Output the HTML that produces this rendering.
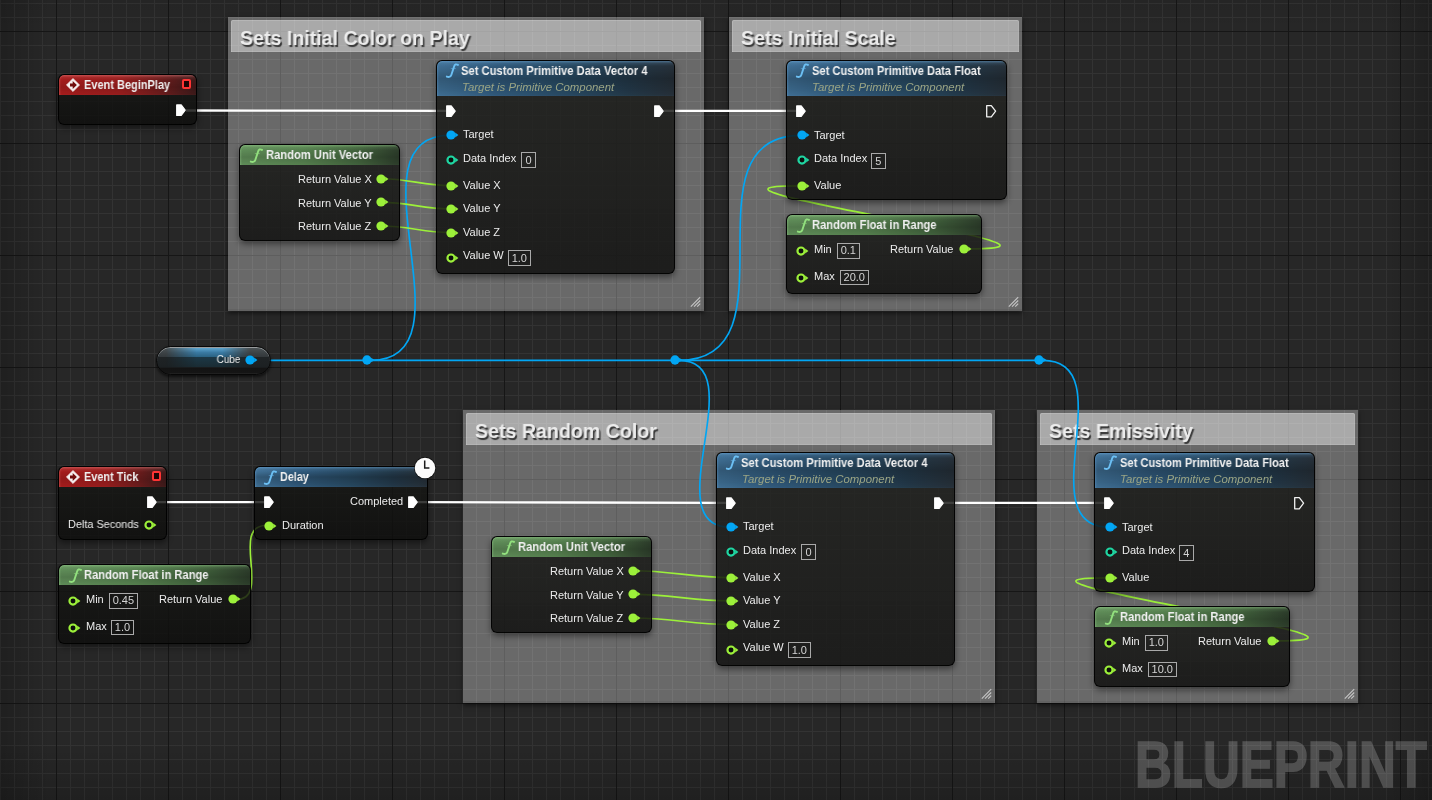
<!DOCTYPE html><html><head><meta charset="utf-8"><style>
*{margin:0;padding:0;box-sizing:border-box}
html,body{width:1432px;height:800px;overflow:hidden;background:#262626}
body{position:relative;font-family:"Liberation Sans",sans-serif}
.cm{position:absolute;background:rgba(255,255,255,0.31);box-shadow:0 2px 5px rgba(0,0,0,0.6),inset 0 -2px 0 rgba(0,0,0,0.06)}
.cmb{display:none}
.cmt{position:absolute;background:rgba(255,255,255,0.43);border-radius:2px 2px 0 0;box-shadow:inset 0 1px 0 rgba(255,255,255,0.16),inset -1px 0 0 rgba(255,255,255,0.1),inset 1px 0 0 rgba(255,255,255,0.14),inset 0 -1px 0 rgba(255,255,255,0.12)}
.nd{position:absolute;border-radius:6px;background:linear-gradient(180deg,rgba(24,25,22,0.82),rgba(14,14,13,0.84));border:1px solid rgba(0,0,0,0.9);box-shadow:0 3px 6px rgba(0,0,0,0.45);overflow:hidden}
.hd{position:absolute;left:0;top:0;right:0;border-radius:5px 5px 0 0}
.hd.red{background:linear-gradient(180deg,rgba(255,150,150,0.4) 0,rgba(255,150,150,0.1) 2.5px,rgba(0,0,0,0) 5px,rgba(0,0,0,0.1) 60%,rgba(0,0,0,0) 100%),linear-gradient(90deg,#a41c1c 0%,#961d1d 45%,#6a1c1c 75%,#3c1a1a 100%);box-shadow:inset 2px 0 2px -1px rgba(255,150,150,0.3)}
.hd.blue{background:linear-gradient(180deg,rgba(120,180,230,0.45) 0,rgba(120,180,230,0.12) 2.5px,rgba(0,0,0,0) 5px,rgba(0,0,0,0.2) 50%,rgba(0,0,0,0.08) 85%,rgba(0,0,0,0) 100%),linear-gradient(90deg,#3f6f94 0%,#30597b 25%,#284a63 55%,#23394a 80%,#263039 100%);box-shadow:inset 2px 0 2px -1px rgba(110,170,220,0.35)}
.hd.green{background:linear-gradient(180deg,rgba(170,230,160,0.4) 0,rgba(170,230,160,0.1) 2.5px,rgba(0,0,0,0) 5px,rgba(0,0,0,0.12) 60%,rgba(0,0,0,0) 100%),linear-gradient(90deg,#5f8c58 0%,#557f4e 40%,#40603b 75%,#2c3c2a 100%);box-shadow:inset 2px 0 2px -1px rgba(170,230,160,0.3)}
.t{position:absolute;white-space:nowrap;line-height:1;transform-origin:left top;will-change:transform}
.pin{position:absolute;overflow:visible}
.ib{position:absolute;border:1px solid #a9a9a9;color:#d4d4d4;font-size:11px;text-align:center;white-space:nowrap;will-change:transform}
.rsq{position:absolute;border:2px solid #ff3434;background:#1e0505;border-radius:2px}
.cube{position:absolute;border-radius:14.5px;border:1px solid #070707;overflow:hidden;background:linear-gradient(180deg,#5c6366 0,#4a5154 1.5px,#3c4245 6px,#32373a 10.5px,#1f2325 10.5px,#1c2022 20px,#131313 21.5px,#151515 26px,#2a2a2a 27px);box-shadow:0 2px 3px rgba(0,0,0,0.6),inset 0 1px 0 rgba(220,220,220,0.5)}
.cg1{position:absolute;left:0;right:0;top:1px;height:9.5px;background:linear-gradient(180deg,#5ea6d0,#3a7aa2 50%,#2a6282);-webkit-mask-image:linear-gradient(90deg,transparent 8%,#000 35%,#000 58%,transparent 82%)}
.cg2{position:absolute;left:0;right:0;top:10.5px;height:9.5px;background:linear-gradient(180deg,#1c3846,#1a2c34);-webkit-mask-image:linear-gradient(90deg,transparent 8%,#000 35%,#000 58%,transparent 82%)}
.bp{position:absolute;left:1134.8px;top:733px;font-size:64px;font-weight:bold;color:#fff;-webkit-text-stroke:1.7px #fff;opacity:0.2;line-height:1;transform:scaleX(0.797);transform-origin:left top;white-space:nowrap}
</style></head><body><svg width="1432" height="800" style="position:absolute;left:0;top:0" shape-rendering="crispEdges"><rect width="1432" height="800" fill="#272727"/><path d="M0.5 0V800M14.5 0V800M28.5 0V800M42.5 0V800M70.5 0V800M84.5 0V800M98.5 0V800M112.5 0V800M126.5 0V800M140.5 0V800M154.5 0V800M182.5 0V800M196.5 0V800M210.5 0V800M224.5 0V800M238.5 0V800M252.5 0V800M266.5 0V800M294.5 0V800M308.5 0V800M322.5 0V800M336.5 0V800M350.5 0V800M364.5 0V800M378.5 0V800M406.5 0V800M420.5 0V800M434.5 0V800M448.5 0V800M462.5 0V800M476.5 0V800M490.5 0V800M518.5 0V800M532.5 0V800M546.5 0V800M560.5 0V800M574.5 0V800M588.5 0V800M602.5 0V800M630.5 0V800M644.5 0V800M658.5 0V800M672.5 0V800M686.5 0V800M700.5 0V800M714.5 0V800M742.5 0V800M756.5 0V800M770.5 0V800M784.5 0V800M798.5 0V800M812.5 0V800M826.5 0V800M854.5 0V800M868.5 0V800M882.5 0V800M896.5 0V800M910.5 0V800M924.5 0V800M938.5 0V800M966.5 0V800M980.5 0V800M994.5 0V800M1008.5 0V800M1022.5 0V800M1036.5 0V800M1050.5 0V800M1078.5 0V800M1092.5 0V800M1106.5 0V800M1120.5 0V800M1134.5 0V800M1148.5 0V800M1162.5 0V800M1190.5 0V800M1204.5 0V800M1218.5 0V800M1232.5 0V800M1246.5 0V800M1260.5 0V800M1274.5 0V800M1302.5 0V800M1316.5 0V800M1330.5 0V800M1344.5 0V800M1358.5 0V800M1372.5 0V800M1386.5 0V800M1414.5 0V800M1428.5 0V800M0 3.5H1432M0 17.5H1432M0 45.5H1432M0 59.5H1432M0 73.5H1432M0 87.5H1432M0 101.5H1432M0 115.5H1432M0 129.5H1432M0 157.5H1432M0 171.5H1432M0 185.5H1432M0 199.5H1432M0 213.5H1432M0 227.5H1432M0 241.5H1432M0 269.5H1432M0 283.5H1432M0 297.5H1432M0 311.5H1432M0 325.5H1432M0 339.5H1432M0 353.5H1432M0 381.5H1432M0 395.5H1432M0 409.5H1432M0 423.5H1432M0 437.5H1432M0 451.5H1432M0 465.5H1432M0 493.5H1432M0 507.5H1432M0 521.5H1432M0 535.5H1432M0 549.5H1432M0 563.5H1432M0 577.5H1432M0 605.5H1432M0 619.5H1432M0 633.5H1432M0 647.5H1432M0 661.5H1432M0 675.5H1432M0 689.5H1432M0 717.5H1432M0 731.5H1432M0 745.5H1432M0 759.5H1432M0 773.5H1432M0 787.5H1432" stroke="#333333" stroke-width="1"/><path d="M56.5 0V800M168.5 0V800M280.5 0V800M392.5 0V800M504.5 0V800M616.5 0V800M728.5 0V800M840.5 0V800M952.5 0V800M1064.5 0V800M1176.5 0V800M1288.5 0V800M1400.5 0V800M0 31.5H1432M0 143.5H1432M0 255.5H1432M0 367.5H1432M0 479.5H1432M0 591.5H1432M0 703.5H1432" stroke="#161616" stroke-width="1"/></svg><div style="position:absolute;left:0;top:0;width:1432px;height:800px;background:linear-gradient(90deg,rgba(0,0,0,0.2) 0,rgba(0,0,0,0) 50px),linear-gradient(270deg,rgba(0,0,0,0.2) 0,rgba(0,0,0,0) 50px),linear-gradient(0deg,rgba(0,0,0,0.18) 0,rgba(0,0,0,0) 60px),linear-gradient(180deg,rgba(0,0,0,0.06) 0,rgba(0,0,0,0) 30px)"></div><div class="cm" style="left:228px;top:17px;width:476px;height:294px"><div class="cmb"></div></div><div class="cmt" style="left:230.5px;top:19.5px;width:470.5px;height:32.8px"></div><div class="t" style="left:239.80px;top:27.56px;font-size:20.6px;font-weight:bold;font-style:normal;color:#ececec;transform:scaleX(0.952);text-shadow:1.5px 1.5px 1px rgba(0,0,0,0.7)">Sets Initial Color on Play</div><svg class="pin" style="left:688px;top:295px" width="16" height="16"><path d="M12.2 2.2L2.8 11.6M12.2 5.5L6 11.6M12.2 8.6L9.2 11.6" stroke="#c4c4c4" stroke-width="1.2"/></svg><div class="cm" style="left:729px;top:17px;width:293px;height:294px"><div class="cmb"></div></div><div class="cmt" style="left:731.5px;top:19.5px;width:287.5px;height:32.8px"></div><div class="t" style="left:740.80px;top:27.56px;font-size:20.6px;font-weight:bold;font-style:normal;color:#ececec;transform:scaleX(0.952);text-shadow:1.5px 1.5px 1px rgba(0,0,0,0.7)">Sets Initial Scale</div><svg class="pin" style="left:1006px;top:295px" width="16" height="16"><path d="M12.2 2.2L2.8 11.6M12.2 5.5L6 11.6M12.2 8.6L9.2 11.6" stroke="#c4c4c4" stroke-width="1.2"/></svg><div class="cm" style="left:463px;top:410px;width:532px;height:293px"><div class="cmb"></div></div><div class="cmt" style="left:465.5px;top:412.5px;width:526.5px;height:32.8px"></div><div class="t" style="left:474.80px;top:420.56px;font-size:20.6px;font-weight:bold;font-style:normal;color:#ececec;transform:scaleX(0.952);text-shadow:1.5px 1.5px 1px rgba(0,0,0,0.7)">Sets Random Color</div><svg class="pin" style="left:979px;top:687px" width="16" height="16"><path d="M12.2 2.2L2.8 11.6M12.2 5.5L6 11.6M12.2 8.6L9.2 11.6" stroke="#c4c4c4" stroke-width="1.2"/></svg><div class="cm" style="left:1037px;top:410px;width:321px;height:293px"><div class="cmb"></div></div><div class="cmt" style="left:1039.5px;top:412.5px;width:315.5px;height:32.8px"></div><div class="t" style="left:1048.80px;top:420.56px;font-size:20.6px;font-weight:bold;font-style:normal;color:#ececec;transform:scaleX(0.952);text-shadow:1.5px 1.5px 1px rgba(0,0,0,0.7)">Sets Emissivity</div><svg class="pin" style="left:1342px;top:687px" width="16" height="16"><path d="M12.2 2.2L2.8 11.6M12.2 5.5L6 11.6M12.2 8.6L9.2 11.6" stroke="#c4c4c4" stroke-width="1.2"/></svg><svg width="1432" height="800" style="position:absolute;left:0;top:0"><path d="M186.00 110.50C277.11 110.50 354.89 110.80 446.00 110.80" stroke="#ffffff" stroke-width="2.3" fill="none"/><path d="M664.00 110.80C710.20 110.80 749.80 110.80 796.00 110.80" stroke="#ffffff" stroke-width="2.3" fill="none"/><path d="M157.00 502.20C194.45 502.20 226.55 502.20 264.00 502.20" stroke="#ffffff" stroke-width="2.3" fill="none"/><path d="M417.00 502.20C525.36 502.20 617.64 502.80 726.00 502.80" stroke="#ffffff" stroke-width="2.3" fill="none"/><path d="M944.00 502.80C1000.00 502.80 1048.00 502.80 1104.00 502.80" stroke="#ffffff" stroke-width="2.3" fill="none"/><path d="M257.00 360.30C294.10 360.30 325.90 360.30 363.00 360.30" stroke="#02a6f4" stroke-width="1.65" fill="none"/><path d="M371.00 360.30C476.00 360.30 566.00 360.30 671.00 360.30" stroke="#02a6f4" stroke-width="1.65" fill="none"/><path d="M679.00 360.30C803.60 360.30 910.40 360.30 1035.00 360.30" stroke="#02a6f4" stroke-width="1.65" fill="none"/><path d="M371.00 360.30C477.44 360.30 343.56 135.20 450.00 135.20" stroke="#02a6f4" stroke-width="1.65" fill="none"/><path d="M679.00 360.30C800.41 360.30 679.59 135.40 801.00 135.40" stroke="#02a6f4" stroke-width="1.65" fill="none"/><path d="M679.00 360.30C755.26 360.30 653.74 527.20 730.00 527.20" stroke="#02a6f4" stroke-width="1.65" fill="none"/><path d="M1043.00 360.30C1124.52 360.30 1027.48 527.20 1109.00 527.20" stroke="#02a6f4" stroke-width="1.65" fill="none"/><path d="M382.00 178.70C408.04 178.70 423.46 185.60 449.50 185.60" stroke="#9cf03a" stroke-width="1.65" fill="none"/><path d="M382.00 202.40C407.87 202.40 423.63 208.80 449.50 208.80" stroke="#9cf03a" stroke-width="1.65" fill="none"/><path d="M382.00 226.00C407.90 226.00 423.60 232.50 449.50 232.50" stroke="#9cf03a" stroke-width="1.65" fill="none"/><path d="M634.00 570.70C669.84 570.70 693.66 577.60 729.50 577.60" stroke="#9cf03a" stroke-width="1.65" fill="none"/><path d="M634.00 594.40C669.66 594.40 693.84 600.80 729.50 600.80" stroke="#9cf03a" stroke-width="1.65" fill="none"/><path d="M634.00 618.00C669.70 618.00 693.80 624.50 729.50 624.50" stroke="#9cf03a" stroke-width="1.65" fill="none"/><path d="M971.00 248.80C1118.50 248.80 649.50 185.80 797.00 185.80" stroke="#9cf03a" stroke-width="1.65" fill="none"/><path d="M1279.00 640.80C1426.50 640.80 957.50 577.80 1105.00 577.80" stroke="#9cf03a" stroke-width="1.65" fill="none"/><path d="M236.00 599.50C272.40 599.50 229.60 525.50 266.00 525.50" stroke="#9cf03a" stroke-width="1.65" fill="none"/></svg><div class="nd" style="left:57.5px;top:74px;width:139.5px;height:51.0px"><div class="hd red" style="height:20px"></div></div><svg class="pin" style="left:64px;top:76px" width="18" height="18"><path d="M9 2.4L15.6 9L9 15.6L2.4 9Z" fill="#f6f0f0" stroke="#f6f0f0" stroke-width="0.6" stroke-linejoin="round"/><path d="M6 7.6H8.7V4.9L12.9 9L8.7 13.1V10.4H6Z" fill="#700d0d"/></svg><div class="t" style="left:83.70px;top:79.14px;font-size:12px;font-weight:bold;font-style:normal;color:#efefef;transform:scaleX(0.916);">Event BeginPlay</div><div class="rsq" style="left:182px;top:79px;width:9px;height:10.200000000000003px"></div><svg class="pin" style="left:175px;top:103.3px" width="12" height="15"><path d="M1.7 1.9H6.2L10.2 7.2L6.2 12.5H1.7Z" fill="#fff" stroke="#fff" stroke-width="1.2" stroke-linejoin="round"/></svg><div class="nd" style="left:238.5px;top:144px;width:161.5px;height:96.5px"><div class="hd green" style="height:20px"></div></div><svg class="pin" style="left:248px;top:146.5px" width="15" height="17"><path d="M14 2.9Q12.6 2.1 11.4 2.5Q10.6 2.9 10.2 4.2L7.3 13Q6.8 14.6 5.2 14.9Q4 15.1 2.8 14.6" fill="none" stroke="#92e07e" stroke-width="1.9" stroke-linecap="round" stroke-linejoin="round"/><path d="M6.8 6.6H11.8" stroke="#92e07e" stroke-width="0.9" opacity="0.55"/></svg><div class="t" style="left:265.50px;top:148.84px;font-size:12px;font-weight:bold;font-style:normal;color:#f0f0f0;transform:scaleX(0.933);">Random Unit Vector</div><svg class="pin" style="left:373.70px;top:171.70px" width="16" height="14"><circle cx="7" cy="7" r="4.6" fill="#9cf03a"/><path d="M11.2 4.6L14.4 7L11.2 9.4Z" fill="#9cf03a"/></svg><div class="t" style="right:1060.60px;top:173.99px;font-size:11px;font-weight:normal;font-style:normal;color:#ebebeb;transform:scaleX(1.0);transform-origin:right top;">Return Value X</div><svg class="pin" style="left:373.70px;top:195.40px" width="16" height="14"><circle cx="7" cy="7" r="4.6" fill="#9cf03a"/><path d="M11.2 4.6L14.4 7L11.2 9.4Z" fill="#9cf03a"/></svg><div class="t" style="right:1060.60px;top:197.69px;font-size:11px;font-weight:normal;font-style:normal;color:#ebebeb;transform:scaleX(1.0);transform-origin:right top;">Return Value Y</div><svg class="pin" style="left:373.70px;top:219.00px" width="16" height="14"><circle cx="7" cy="7" r="4.6" fill="#9cf03a"/><path d="M11.2 4.6L14.4 7L11.2 9.4Z" fill="#9cf03a"/></svg><div class="t" style="right:1060.60px;top:221.29px;font-size:11px;font-weight:normal;font-style:normal;color:#ebebeb;transform:scaleX(1.0);transform-origin:right top;">Return Value Z</div><div class="nd" style="left:435.5px;top:60px;width:239.5px;height:213.5px"><div class="hd blue" style="height:35px"></div></div><svg class="pin" style="left:444px;top:62px" width="15" height="17"><path d="M14 2.9Q12.6 2.1 11.4 2.5Q10.6 2.9 10.2 4.2L7.3 13Q6.8 14.6 5.2 14.9Q4 15.1 2.8 14.6" fill="none" stroke="#6cc0f4" stroke-width="1.9" stroke-linecap="round" stroke-linejoin="round"/><path d="M6.8 6.6H11.8" stroke="#6cc0f4" stroke-width="0.9" opacity="0.55"/></svg><div class="t" style="left:461.40px;top:64.64px;font-size:12px;font-weight:bold;font-style:normal;color:#f0f0f0;transform:scaleX(0.932);">Set Custom Primitive Data Vector 4</div><div class="t" style="left:462.00px;top:81.56px;font-size:10.8px;font-weight:normal;font-style:italic;color:#9ba585;transform:scaleX(1.055);">Target is Primitive Component</div><svg class="pin" style="left:445px;top:103.8px" width="12" height="15"><path d="M1.7 1.9H6.2L10.2 7.2L6.2 12.5H1.7Z" fill="#fff" stroke="#fff" stroke-width="1.2" stroke-linejoin="round"/></svg><svg class="pin" style="left:653px;top:103.8px" width="12" height="15"><path d="M1.7 1.9H6.2L10.2 7.2L6.2 12.5H1.7Z" fill="#fff" stroke="#fff" stroke-width="1.2" stroke-linejoin="round"/></svg><svg class="pin" style="left:443.50px;top:128.00px" width="16" height="14"><circle cx="7" cy="7" r="4.6" fill="#02a6f4"/><path d="M11.2 4.6L14.4 7L11.2 9.4Z" fill="#02a6f4"/></svg><div class="t" style="left:463.00px;top:129.39px;font-size:11px;font-weight:normal;font-style:normal;color:#ebebeb;transform:scaleX(1.0);">Target</div><svg class="pin" style="left:443.50px;top:153.30px" width="16" height="14"><circle cx="7" cy="7" r="3.55" fill="#0e0e0e" stroke="#1fd6a2" stroke-width="2.15"/><path d="M11.2 4.6L14.4 7L11.2 9.4Z" fill="#1fd6a2"/></svg><div class="t" style="left:463.00px;top:153.19px;font-size:11px;font-weight:normal;font-style:normal;color:#ebebeb;transform:scaleX(1.0);">Data Index</div><div class="ib" style="left:521.0px;top:152.2px;width:15.0px;height:16.4px;line-height:14.4px">0</div><svg class="pin" style="left:443.50px;top:178.60px" width="16" height="14"><circle cx="7" cy="7" r="4.6" fill="#9cf03a"/><path d="M11.2 4.6L14.4 7L11.2 9.4Z" fill="#9cf03a"/></svg><div class="t" style="left:463.00px;top:179.99px;font-size:11px;font-weight:normal;font-style:normal;color:#ebebeb;transform:scaleX(1.0);">Value X</div><svg class="pin" style="left:443.50px;top:201.80px" width="16" height="14"><circle cx="7" cy="7" r="4.6" fill="#9cf03a"/><path d="M11.2 4.6L14.4 7L11.2 9.4Z" fill="#9cf03a"/></svg><div class="t" style="left:463.00px;top:203.19px;font-size:11px;font-weight:normal;font-style:normal;color:#ebebeb;transform:scaleX(1.0);">Value Y</div><svg class="pin" style="left:443.50px;top:225.50px" width="16" height="14"><circle cx="7" cy="7" r="4.6" fill="#9cf03a"/><path d="M11.2 4.6L14.4 7L11.2 9.4Z" fill="#9cf03a"/></svg><div class="t" style="left:463.00px;top:226.89px;font-size:11px;font-weight:normal;font-style:normal;color:#ebebeb;transform:scaleX(1.0);">Value Z</div><svg class="pin" style="left:443.50px;top:250.50px" width="16" height="14"><circle cx="7" cy="7" r="3.55" fill="#0e0e0e" stroke="#9cf03a" stroke-width="2.15"/><path d="M11.2 4.6L14.4 7L11.2 9.4Z" fill="#9cf03a"/></svg><div class="t" style="left:463.00px;top:250.39px;font-size:11px;font-weight:normal;font-style:normal;color:#ebebeb;transform:scaleX(1.0);">Value W</div><div class="ib" style="left:508.0px;top:250.0px;width:22.6px;height:16.0px;line-height:14.0px">1.0</div><div class="nd" style="left:785.5px;top:60px;width:221.5px;height:139.5px"><div class="hd blue" style="height:35px"></div></div><svg class="pin" style="left:794px;top:62px" width="15" height="17"><path d="M14 2.9Q12.6 2.1 11.4 2.5Q10.6 2.9 10.2 4.2L7.3 13Q6.8 14.6 5.2 14.9Q4 15.1 2.8 14.6" fill="none" stroke="#6cc0f4" stroke-width="1.9" stroke-linecap="round" stroke-linejoin="round"/><path d="M6.8 6.6H11.8" stroke="#6cc0f4" stroke-width="0.9" opacity="0.55"/></svg><div class="t" style="left:811.50px;top:64.64px;font-size:12px;font-weight:bold;font-style:normal;color:#f0f0f0;transform:scaleX(0.927);">Set Custom Primitive Data Float</div><div class="t" style="left:812.00px;top:81.56px;font-size:10.8px;font-weight:normal;font-style:italic;color:#9ba585;transform:scaleX(1.055);">Target is Primitive Component</div><svg class="pin" style="left:795px;top:103.8px" width="12" height="15"><path d="M1.7 1.9H6.2L10.2 7.2L6.2 12.5H1.7Z" fill="#fff" stroke="#fff" stroke-width="1.2" stroke-linejoin="round"/></svg><svg class="pin" style="left:985px;top:103.8px" width="13" height="15"><path d="M1.7 1.6H6.3L10.6 7.2L6.3 12.8H1.7Z" fill="none" stroke="#f2f2f2" stroke-width="1.3" stroke-linejoin="round"/></svg><svg class="pin" style="left:794.60px;top:128.20px" width="16" height="14"><circle cx="7" cy="7" r="4.6" fill="#02a6f4"/><path d="M11.2 4.6L14.4 7L11.2 9.4Z" fill="#02a6f4"/></svg><div class="t" style="left:813.70px;top:129.59px;font-size:11px;font-weight:normal;font-style:normal;color:#ebebeb;transform:scaleX(1.0);">Target</div><svg class="pin" style="left:794.60px;top:153.30px" width="16" height="14"><circle cx="7" cy="7" r="3.55" fill="#0e0e0e" stroke="#1fd6a2" stroke-width="2.15"/><path d="M11.2 4.6L14.4 7L11.2 9.4Z" fill="#1fd6a2"/></svg><div class="t" style="left:813.70px;top:152.99px;font-size:11px;font-weight:normal;font-style:normal;color:#ebebeb;transform:scaleX(1.0);">Data Index</div><div class="ib" style="left:871.3px;top:152.5px;width:14.7px;height:16.3px;line-height:14.3px">5</div><svg class="pin" style="left:794.60px;top:178.80px" width="16" height="14"><circle cx="7" cy="7" r="4.6" fill="#9cf03a"/><path d="M11.2 4.6L14.4 7L11.2 9.4Z" fill="#9cf03a"/></svg><div class="t" style="left:813.70px;top:180.19px;font-size:11px;font-weight:normal;font-style:normal;color:#ebebeb;transform:scaleX(1.0);">Value</div><div class="nd" style="left:785.5px;top:214px;width:196.5px;height:79.5px"><div class="hd green" style="height:20px"></div></div><svg class="pin" style="left:795px;top:216.5px" width="15" height="17"><path d="M14 2.9Q12.6 2.1 11.4 2.5Q10.6 2.9 10.2 4.2L7.3 13Q6.8 14.6 5.2 14.9Q4 15.1 2.8 14.6" fill="none" stroke="#92e07e" stroke-width="1.9" stroke-linecap="round" stroke-linejoin="round"/><path d="M6.8 6.6H11.8" stroke="#92e07e" stroke-width="0.9" opacity="0.55"/></svg><div class="t" style="left:811.50px;top:219.04px;font-size:12px;font-weight:bold;font-style:normal;color:#f0f0f0;transform:scaleX(0.929);">Random Float in Range</div><svg class="pin" style="left:794.30px;top:243.80px" width="16" height="14"><circle cx="7" cy="7" r="3.55" fill="#0e0e0e" stroke="#9cf03a" stroke-width="2.15"/><path d="M11.2 4.6L14.4 7L11.2 9.4Z" fill="#9cf03a"/></svg><div class="t" style="left:814.00px;top:244.09px;font-size:11px;font-weight:normal;font-style:normal;color:#ebebeb;transform:scaleX(1.0);">Min</div><div class="ib" style="left:837.3px;top:243.3px;width:22.7px;height:15.7px;line-height:13.7px">0.1</div><svg class="pin" style="left:794.30px;top:270.70px" width="16" height="14"><circle cx="7" cy="7" r="3.55" fill="#0e0e0e" stroke="#9cf03a" stroke-width="2.15"/><path d="M11.2 4.6L14.4 7L11.2 9.4Z" fill="#9cf03a"/></svg><div class="t" style="left:814.00px;top:270.89px;font-size:11px;font-weight:normal;font-style:normal;color:#ebebeb;transform:scaleX(1.0);">Max</div><div class="ib" style="left:839.7px;top:269.8px;width:28.5px;height:15.4px;line-height:13.4px">20.0</div><svg class="pin" style="left:956.80px;top:241.90px" width="16" height="14"><circle cx="7" cy="7" r="4.6" fill="#9cf03a"/><path d="M11.2 4.6L14.4 7L11.2 9.4Z" fill="#9cf03a"/></svg><div class="t" style="right:478.20px;top:244.09px;font-size:11px;font-weight:normal;font-style:normal;color:#ebebeb;transform:scaleX(1.0);transform-origin:right top;">Return Value</div><div class="cube" style="left:156px;top:345.5px;width:115px;height:29.5px"><div class="cg1"></div><div class="cg2"></div></div><div class="t" style="right:1191.70px;top:354.49px;font-size:11px;font-weight:normal;font-style:normal;color:#f0f0f0;transform:scaleX(0.9);transform-origin:right top;">Cube</div><svg class="pin" style="left:242.70px;top:353.00px" width="16" height="14"><circle cx="7" cy="7" r="4.6" fill="#02a6f4"/><path d="M11.2 4.6L14.4 7L11.2 9.4Z" fill="#02a6f4"/></svg><svg class="pin" style="left:359.4px;top:352.25px" width="16" height="16"><circle cx="8" cy="8" r="4.65" fill="#02a6f4"/><path d="M12.2 5.7L15.4 8L12.2 10.3Z" fill="#02a6f4"/></svg><svg class="pin" style="left:667.4px;top:352.25px" width="16" height="16"><circle cx="8" cy="8" r="4.65" fill="#02a6f4"/><path d="M12.2 5.7L15.4 8L12.2 10.3Z" fill="#02a6f4"/></svg><svg class="pin" style="left:1031.4px;top:352.25px" width="16" height="16"><circle cx="8" cy="8" r="4.65" fill="#02a6f4"/><path d="M12.2 5.7L15.4 8L12.2 10.3Z" fill="#02a6f4"/></svg><div class="nd" style="left:57.5px;top:466px;width:109.5px;height:73.5px"><div class="hd red" style="height:20px"></div></div><svg class="pin" style="left:64px;top:468px" width="18" height="18"><path d="M9 2.4L15.6 9L9 15.6L2.4 9Z" fill="#f6f0f0" stroke="#f6f0f0" stroke-width="0.6" stroke-linejoin="round"/><path d="M6 7.6H8.7V4.9L12.9 9L8.7 13.1V10.4H6Z" fill="#700d0d"/></svg><div class="t" style="left:83.70px;top:471.14px;font-size:12px;font-weight:bold;font-style:normal;color:#efefef;transform:scaleX(0.908);">Event Tick</div><div class="rsq" style="left:152px;top:471px;width:9px;height:10.199999999999989px"></div><svg class="pin" style="left:146px;top:494.8px" width="12" height="15"><path d="M1.7 1.9H6.2L10.2 7.2L6.2 12.5H1.7Z" fill="#fff" stroke="#fff" stroke-width="1.2" stroke-linejoin="round"/></svg><div class="t" style="left:68.20px;top:519.29px;font-size:11px;font-weight:normal;font-style:normal;color:#ebebeb;transform:scaleX(0.99);">Delta Seconds</div><svg class="pin" style="left:142.20px;top:518.30px" width="16" height="14"><circle cx="7" cy="7" r="3.55" fill="#0e0e0e" stroke="#9cf03a" stroke-width="2.15"/><path d="M11.2 4.6L14.4 7L11.2 9.4Z" fill="#9cf03a"/></svg><div class="nd" style="left:253.5px;top:466px;width:174.5px;height:73.5px"><div class="hd blue" style="height:20px"></div></div><svg class="pin" style="left:262px;top:468.5px" width="15" height="17"><path d="M14 2.9Q12.6 2.1 11.4 2.5Q10.6 2.9 10.2 4.2L7.3 13Q6.8 14.6 5.2 14.9Q4 15.1 2.8 14.6" fill="none" stroke="#6cc0f4" stroke-width="1.9" stroke-linecap="round" stroke-linejoin="round"/><path d="M6.8 6.6H11.8" stroke="#6cc0f4" stroke-width="0.9" opacity="0.55"/></svg><div class="t" style="left:279.50px;top:470.64px;font-size:12px;font-weight:bold;font-style:normal;color:#f0f0f0;transform:scaleX(0.9);">Delay</div><svg class="pin" style="left:263px;top:494.8px" width="12" height="15"><path d="M1.7 1.9H6.2L10.2 7.2L6.2 12.5H1.7Z" fill="#fff" stroke="#fff" stroke-width="1.2" stroke-linejoin="round"/></svg><svg class="pin" style="left:406.5px;top:494.8px" width="12" height="15"><path d="M1.7 1.9H6.2L10.2 7.2L6.2 12.5H1.7Z" fill="#fff" stroke="#fff" stroke-width="1.2" stroke-linejoin="round"/></svg><div class="t" style="right:1029.00px;top:495.89px;font-size:11px;font-weight:normal;font-style:normal;color:#ebebeb;transform:scaleX(1.0);transform-origin:right top;">Completed</div><svg class="pin" style="left:261.80px;top:518.50px" width="16" height="14"><circle cx="7" cy="7" r="4.6" fill="#9cf03a"/><path d="M11.2 4.6L14.4 7L11.2 9.4Z" fill="#9cf03a"/></svg><div class="t" style="left:281.50px;top:519.89px;font-size:11px;font-weight:normal;font-style:normal;color:#ebebeb;transform:scaleX(1.0);">Duration</div><svg class="pin" style="left:412.70px;top:455.60px" width="24" height="24"><circle cx="12" cy="12" r="10.9" fill="#0c0c0c" opacity="0.85"/><circle cx="12" cy="12" r="10.3" fill="#fbfbfb"/><path d="M11.7 4.6V11.9H16.4" fill="none" stroke="#1a1a1a" stroke-width="1.5"/></svg><div class="nd" style="left:57.5px;top:564px;width:193.5px;height:79.5px"><div class="hd green" style="height:20px"></div></div><svg class="pin" style="left:67px;top:566.5px" width="15" height="17"><path d="M14 2.9Q12.6 2.1 11.4 2.5Q10.6 2.9 10.2 4.2L7.3 13Q6.8 14.6 5.2 14.9Q4 15.1 2.8 14.6" fill="none" stroke="#92e07e" stroke-width="1.9" stroke-linecap="round" stroke-linejoin="round"/><path d="M6.8 6.6H11.8" stroke="#92e07e" stroke-width="0.9" opacity="0.55"/></svg><div class="t" style="left:83.50px;top:569.04px;font-size:12px;font-weight:bold;font-style:normal;color:#f0f0f0;transform:scaleX(0.929);">Random Float in Range</div><svg class="pin" style="left:66.30px;top:593.80px" width="16" height="14"><circle cx="7" cy="7" r="3.55" fill="#0e0e0e" stroke="#9cf03a" stroke-width="2.15"/><path d="M11.2 4.6L14.4 7L11.2 9.4Z" fill="#9cf03a"/></svg><div class="t" style="left:86.00px;top:594.09px;font-size:11px;font-weight:normal;font-style:normal;color:#ebebeb;transform:scaleX(1.0);">Min</div><div class="ib" style="left:109.2px;top:593.3px;width:28.8px;height:15.7px;line-height:13.7px">0.45</div><svg class="pin" style="left:66.30px;top:620.70px" width="16" height="14"><circle cx="7" cy="7" r="3.55" fill="#0e0e0e" stroke="#9cf03a" stroke-width="2.15"/><path d="M11.2 4.6L14.4 7L11.2 9.4Z" fill="#9cf03a"/></svg><div class="t" style="left:86.00px;top:620.89px;font-size:11px;font-weight:normal;font-style:normal;color:#ebebeb;transform:scaleX(1.0);">Max</div><div class="ib" style="left:111.3px;top:619.8px;width:22.9px;height:15.4px;line-height:13.4px">1.0</div><svg class="pin" style="left:225.80px;top:591.90px" width="16" height="14"><circle cx="7" cy="7" r="4.6" fill="#9cf03a"/><path d="M11.2 4.6L14.4 7L11.2 9.4Z" fill="#9cf03a"/></svg><div class="t" style="right:1209.20px;top:594.09px;font-size:11px;font-weight:normal;font-style:normal;color:#ebebeb;transform:scaleX(1.0);transform-origin:right top;">Return Value</div><div class="nd" style="left:490.5px;top:536px;width:161.5px;height:96.5px"><div class="hd green" style="height:20px"></div></div><svg class="pin" style="left:500px;top:538.5px" width="15" height="17"><path d="M14 2.9Q12.6 2.1 11.4 2.5Q10.6 2.9 10.2 4.2L7.3 13Q6.8 14.6 5.2 14.9Q4 15.1 2.8 14.6" fill="none" stroke="#92e07e" stroke-width="1.9" stroke-linecap="round" stroke-linejoin="round"/><path d="M6.8 6.6H11.8" stroke="#92e07e" stroke-width="0.9" opacity="0.55"/></svg><div class="t" style="left:517.50px;top:540.84px;font-size:12px;font-weight:bold;font-style:normal;color:#f0f0f0;transform:scaleX(0.933);">Random Unit Vector</div><svg class="pin" style="left:625.70px;top:563.70px" width="16" height="14"><circle cx="7" cy="7" r="4.6" fill="#9cf03a"/><path d="M11.2 4.6L14.4 7L11.2 9.4Z" fill="#9cf03a"/></svg><div class="t" style="right:808.60px;top:565.99px;font-size:11px;font-weight:normal;font-style:normal;color:#ebebeb;transform:scaleX(1.0);transform-origin:right top;">Return Value X</div><svg class="pin" style="left:625.70px;top:587.40px" width="16" height="14"><circle cx="7" cy="7" r="4.6" fill="#9cf03a"/><path d="M11.2 4.6L14.4 7L11.2 9.4Z" fill="#9cf03a"/></svg><div class="t" style="right:808.60px;top:589.69px;font-size:11px;font-weight:normal;font-style:normal;color:#ebebeb;transform:scaleX(1.0);transform-origin:right top;">Return Value Y</div><svg class="pin" style="left:625.70px;top:611.00px" width="16" height="14"><circle cx="7" cy="7" r="4.6" fill="#9cf03a"/><path d="M11.2 4.6L14.4 7L11.2 9.4Z" fill="#9cf03a"/></svg><div class="t" style="right:808.60px;top:613.29px;font-size:11px;font-weight:normal;font-style:normal;color:#ebebeb;transform:scaleX(1.0);transform-origin:right top;">Return Value Z</div><div class="nd" style="left:715.5px;top:452px;width:239.5px;height:213.5px"><div class="hd blue" style="height:35px"></div></div><svg class="pin" style="left:724px;top:454px" width="15" height="17"><path d="M14 2.9Q12.6 2.1 11.4 2.5Q10.6 2.9 10.2 4.2L7.3 13Q6.8 14.6 5.2 14.9Q4 15.1 2.8 14.6" fill="none" stroke="#6cc0f4" stroke-width="1.9" stroke-linecap="round" stroke-linejoin="round"/><path d="M6.8 6.6H11.8" stroke="#6cc0f4" stroke-width="0.9" opacity="0.55"/></svg><div class="t" style="left:741.40px;top:456.64px;font-size:12px;font-weight:bold;font-style:normal;color:#f0f0f0;transform:scaleX(0.932);">Set Custom Primitive Data Vector 4</div><div class="t" style="left:742.00px;top:473.56px;font-size:10.8px;font-weight:normal;font-style:italic;color:#9ba585;transform:scaleX(1.055);">Target is Primitive Component</div><svg class="pin" style="left:725px;top:495.8px" width="12" height="15"><path d="M1.7 1.9H6.2L10.2 7.2L6.2 12.5H1.7Z" fill="#fff" stroke="#fff" stroke-width="1.2" stroke-linejoin="round"/></svg><svg class="pin" style="left:933px;top:495.8px" width="12" height="15"><path d="M1.7 1.9H6.2L10.2 7.2L6.2 12.5H1.7Z" fill="#fff" stroke="#fff" stroke-width="1.2" stroke-linejoin="round"/></svg><svg class="pin" style="left:723.50px;top:520.00px" width="16" height="14"><circle cx="7" cy="7" r="4.6" fill="#02a6f4"/><path d="M11.2 4.6L14.4 7L11.2 9.4Z" fill="#02a6f4"/></svg><div class="t" style="left:743.00px;top:521.39px;font-size:11px;font-weight:normal;font-style:normal;color:#ebebeb;transform:scaleX(1.0);">Target</div><svg class="pin" style="left:723.50px;top:545.30px" width="16" height="14"><circle cx="7" cy="7" r="3.55" fill="#0e0e0e" stroke="#1fd6a2" stroke-width="2.15"/><path d="M11.2 4.6L14.4 7L11.2 9.4Z" fill="#1fd6a2"/></svg><div class="t" style="left:743.00px;top:545.19px;font-size:11px;font-weight:normal;font-style:normal;color:#ebebeb;transform:scaleX(1.0);">Data Index</div><div class="ib" style="left:801.0px;top:544.2px;width:15.0px;height:16.4px;line-height:14.4px">0</div><svg class="pin" style="left:723.50px;top:570.60px" width="16" height="14"><circle cx="7" cy="7" r="4.6" fill="#9cf03a"/><path d="M11.2 4.6L14.4 7L11.2 9.4Z" fill="#9cf03a"/></svg><div class="t" style="left:743.00px;top:571.99px;font-size:11px;font-weight:normal;font-style:normal;color:#ebebeb;transform:scaleX(1.0);">Value X</div><svg class="pin" style="left:723.50px;top:593.80px" width="16" height="14"><circle cx="7" cy="7" r="4.6" fill="#9cf03a"/><path d="M11.2 4.6L14.4 7L11.2 9.4Z" fill="#9cf03a"/></svg><div class="t" style="left:743.00px;top:595.19px;font-size:11px;font-weight:normal;font-style:normal;color:#ebebeb;transform:scaleX(1.0);">Value Y</div><svg class="pin" style="left:723.50px;top:617.50px" width="16" height="14"><circle cx="7" cy="7" r="4.6" fill="#9cf03a"/><path d="M11.2 4.6L14.4 7L11.2 9.4Z" fill="#9cf03a"/></svg><div class="t" style="left:743.00px;top:618.89px;font-size:11px;font-weight:normal;font-style:normal;color:#ebebeb;transform:scaleX(1.0);">Value Z</div><svg class="pin" style="left:723.50px;top:642.50px" width="16" height="14"><circle cx="7" cy="7" r="3.55" fill="#0e0e0e" stroke="#9cf03a" stroke-width="2.15"/><path d="M11.2 4.6L14.4 7L11.2 9.4Z" fill="#9cf03a"/></svg><div class="t" style="left:743.00px;top:642.39px;font-size:11px;font-weight:normal;font-style:normal;color:#ebebeb;transform:scaleX(1.0);">Value W</div><div class="ib" style="left:788.0px;top:642.0px;width:22.6px;height:16.0px;line-height:14.0px">1.0</div><div class="nd" style="left:1093.5px;top:452px;width:221.5px;height:139.5px"><div class="hd blue" style="height:35px"></div></div><svg class="pin" style="left:1102px;top:454px" width="15" height="17"><path d="M14 2.9Q12.6 2.1 11.4 2.5Q10.6 2.9 10.2 4.2L7.3 13Q6.8 14.6 5.2 14.9Q4 15.1 2.8 14.6" fill="none" stroke="#6cc0f4" stroke-width="1.9" stroke-linecap="round" stroke-linejoin="round"/><path d="M6.8 6.6H11.8" stroke="#6cc0f4" stroke-width="0.9" opacity="0.55"/></svg><div class="t" style="left:1119.50px;top:456.64px;font-size:12px;font-weight:bold;font-style:normal;color:#f0f0f0;transform:scaleX(0.927);">Set Custom Primitive Data Float</div><div class="t" style="left:1120.00px;top:473.56px;font-size:10.8px;font-weight:normal;font-style:italic;color:#9ba585;transform:scaleX(1.055);">Target is Primitive Component</div><svg class="pin" style="left:1103px;top:495.8px" width="12" height="15"><path d="M1.7 1.9H6.2L10.2 7.2L6.2 12.5H1.7Z" fill="#fff" stroke="#fff" stroke-width="1.2" stroke-linejoin="round"/></svg><svg class="pin" style="left:1293px;top:495.8px" width="13" height="15"><path d="M1.7 1.6H6.3L10.6 7.2L6.3 12.8H1.7Z" fill="none" stroke="#f2f2f2" stroke-width="1.3" stroke-linejoin="round"/></svg><svg class="pin" style="left:1102.60px;top:520.20px" width="16" height="14"><circle cx="7" cy="7" r="4.6" fill="#02a6f4"/><path d="M11.2 4.6L14.4 7L11.2 9.4Z" fill="#02a6f4"/></svg><div class="t" style="left:1121.70px;top:521.59px;font-size:11px;font-weight:normal;font-style:normal;color:#ebebeb;transform:scaleX(1.0);">Target</div><svg class="pin" style="left:1102.60px;top:545.30px" width="16" height="14"><circle cx="7" cy="7" r="3.55" fill="#0e0e0e" stroke="#1fd6a2" stroke-width="2.15"/><path d="M11.2 4.6L14.4 7L11.2 9.4Z" fill="#1fd6a2"/></svg><div class="t" style="left:1121.70px;top:544.99px;font-size:11px;font-weight:normal;font-style:normal;color:#ebebeb;transform:scaleX(1.0);">Data Index</div><div class="ib" style="left:1179.3px;top:544.5px;width:14.7px;height:16.3px;line-height:14.3px">4</div><svg class="pin" style="left:1102.60px;top:570.80px" width="16" height="14"><circle cx="7" cy="7" r="4.6" fill="#9cf03a"/><path d="M11.2 4.6L14.4 7L11.2 9.4Z" fill="#9cf03a"/></svg><div class="t" style="left:1121.70px;top:572.19px;font-size:11px;font-weight:normal;font-style:normal;color:#ebebeb;transform:scaleX(1.0);">Value</div><div class="nd" style="left:1093.5px;top:606px;width:196.5px;height:80.5px"><div class="hd green" style="height:20px"></div></div><svg class="pin" style="left:1103px;top:608.5px" width="15" height="17"><path d="M14 2.9Q12.6 2.1 11.4 2.5Q10.6 2.9 10.2 4.2L7.3 13Q6.8 14.6 5.2 14.9Q4 15.1 2.8 14.6" fill="none" stroke="#92e07e" stroke-width="1.9" stroke-linecap="round" stroke-linejoin="round"/><path d="M6.8 6.6H11.8" stroke="#92e07e" stroke-width="0.9" opacity="0.55"/></svg><div class="t" style="left:1119.50px;top:611.04px;font-size:12px;font-weight:bold;font-style:normal;color:#f0f0f0;transform:scaleX(0.929);">Random Float in Range</div><svg class="pin" style="left:1102.30px;top:635.80px" width="16" height="14"><circle cx="7" cy="7" r="3.55" fill="#0e0e0e" stroke="#9cf03a" stroke-width="2.15"/><path d="M11.2 4.6L14.4 7L11.2 9.4Z" fill="#9cf03a"/></svg><div class="t" style="left:1122.00px;top:636.09px;font-size:11px;font-weight:normal;font-style:normal;color:#ebebeb;transform:scaleX(1.0);">Min</div><div class="ib" style="left:1145.3px;top:635.3px;width:22.7px;height:15.7px;line-height:13.7px">1.0</div><svg class="pin" style="left:1102.30px;top:662.70px" width="16" height="14"><circle cx="7" cy="7" r="3.55" fill="#0e0e0e" stroke="#9cf03a" stroke-width="2.15"/><path d="M11.2 4.6L14.4 7L11.2 9.4Z" fill="#9cf03a"/></svg><div class="t" style="left:1122.00px;top:662.89px;font-size:11px;font-weight:normal;font-style:normal;color:#ebebeb;transform:scaleX(1.0);">Max</div><div class="ib" style="left:1147.7px;top:661.8px;width:28.5px;height:15.4px;line-height:13.4px">10.0</div><svg class="pin" style="left:1264.80px;top:633.90px" width="16" height="14"><circle cx="7" cy="7" r="4.6" fill="#9cf03a"/><path d="M11.2 4.6L14.4 7L11.2 9.4Z" fill="#9cf03a"/></svg><div class="t" style="right:170.20px;top:636.09px;font-size:11px;font-weight:normal;font-style:normal;color:#ebebeb;transform:scaleX(1.0);transform-origin:right top;">Return Value</div><div class="bp">BLUEPRINT</div></body></html>
